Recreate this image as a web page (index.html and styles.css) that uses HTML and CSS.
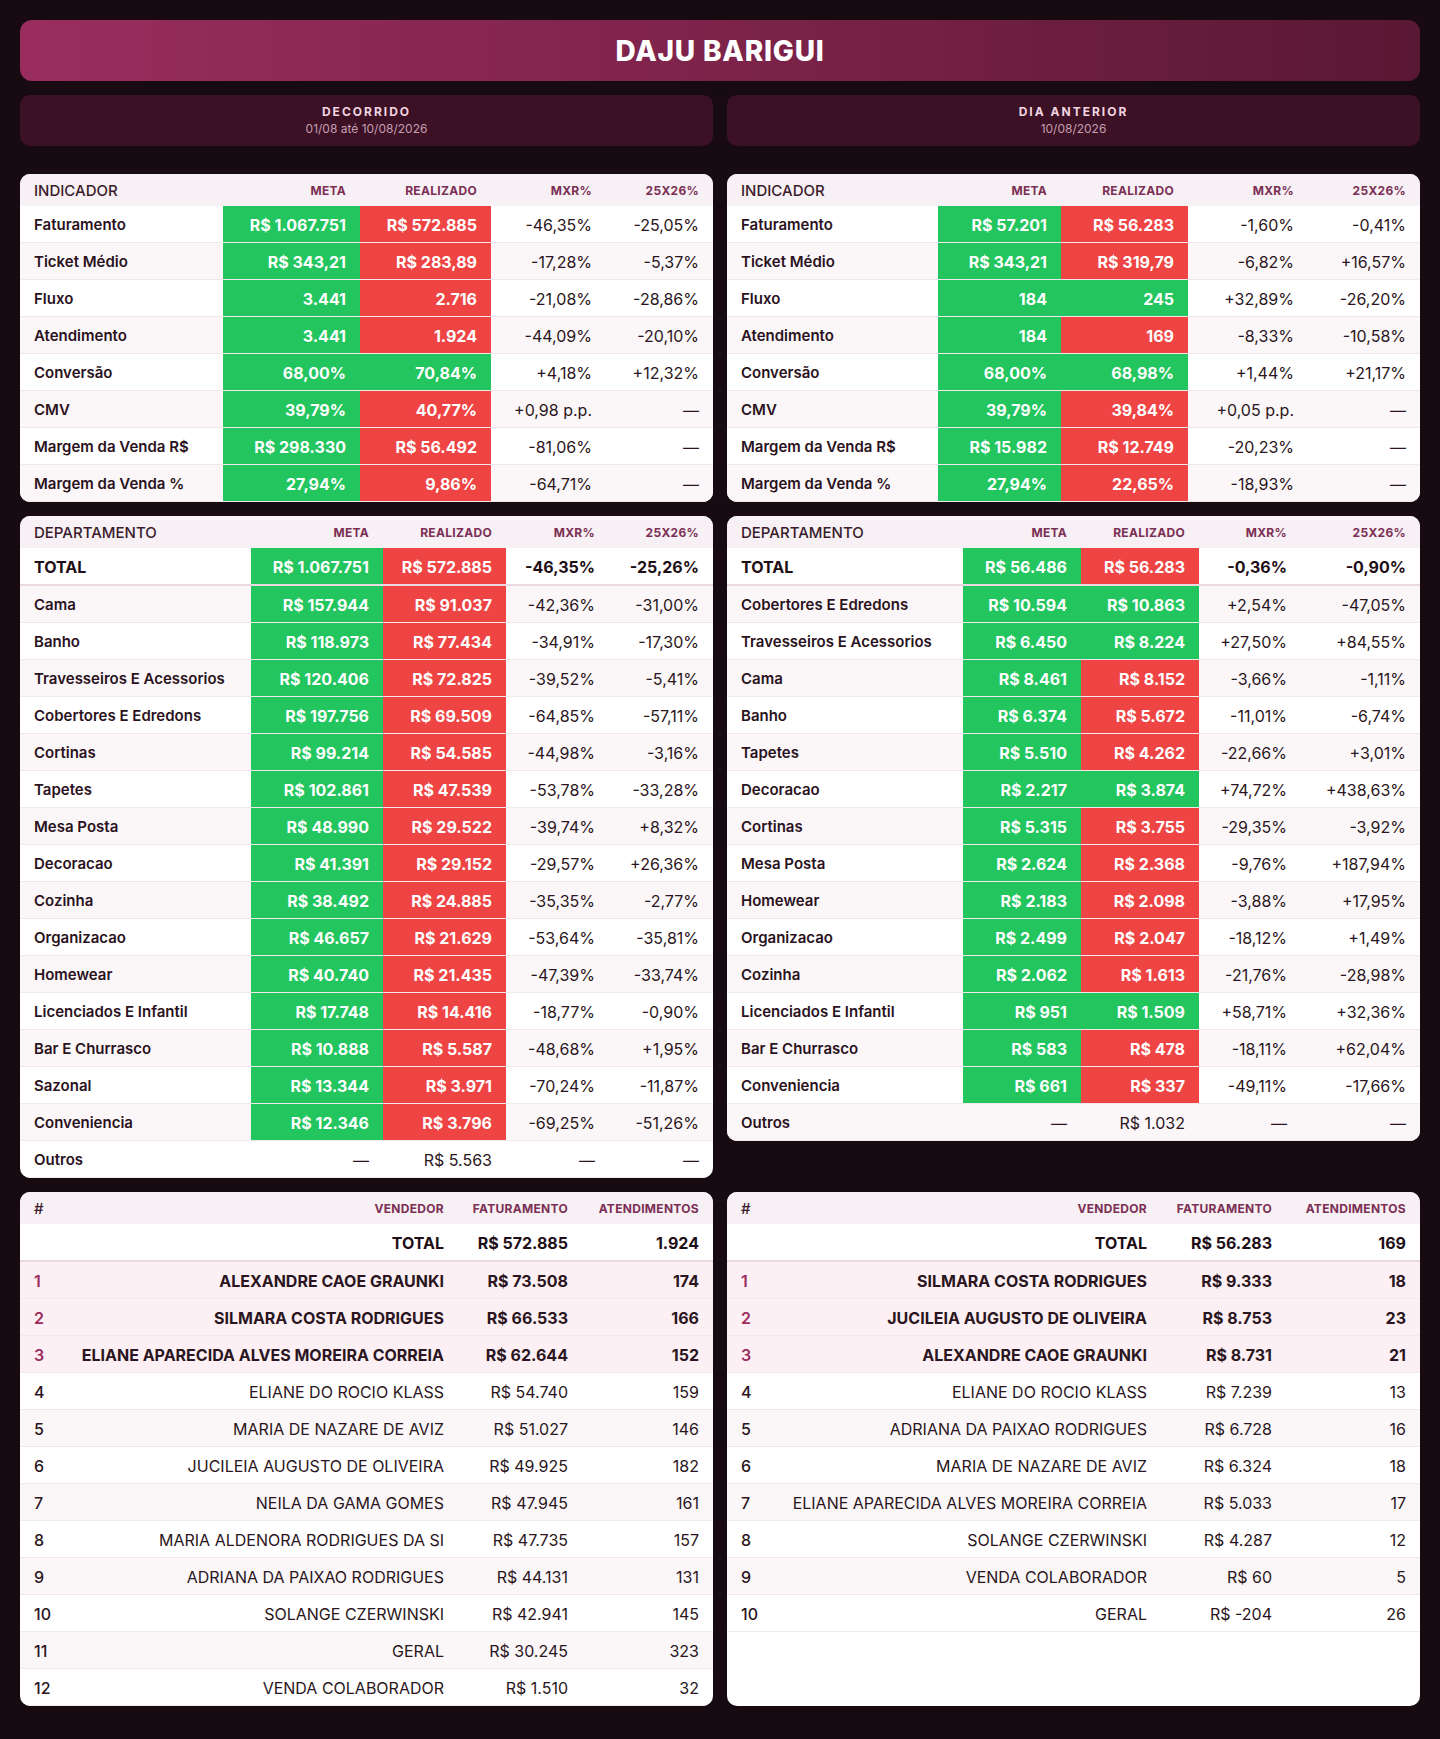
FILE: index.html
```html
<!DOCTYPE html>
<html lang="pt-BR">
<head>
<meta charset="utf-8">
<title>DAJU BARIGUI</title>
<link rel="stylesheet" href="styles.css">
</head>
<body>
<div class="page">
  <header class="titlebar"><h1>DAJU BARIGUI</h1></header>

  <div class="periods">
    <div class="period">
      <div class="period-name">DECORRIDO</div>
      <div class="period-date">01/08 até 10/08/2026</div>
    </div>
    <div class="period">
      <div class="period-name">DIA ANTERIOR</div>
      <div class="period-date">10/08/2026</div>
    </div>
  </div>

  <main class="grid">
    <!-- Indicador esquerdo -->
    <section class="panel panel-fit">
      <table class="tbl ind-l">
        <colgroup><col class="c1"><col class="c2"><col class="c3"><col class="c4"><col class="c5"></colgroup>
        <thead><tr><th class="lead">INDICADOR</th><th>META</th><th>REALIZADO</th><th>MXR%</th><th>25X26%</th></tr></thead>
        <tbody>
          <tr><td class="lbl">Faturamento</td><td class="g">R$ 1.067.751</td><td class="r">R$ 572.885</td><td>-46,35%</td><td>-25,05%</td></tr>
          <tr><td class="lbl">Ticket Médio</td><td class="g">R$ 343,21</td><td class="r">R$ 283,89</td><td>-17,28%</td><td>-5,37%</td></tr>
          <tr><td class="lbl">Fluxo</td><td class="g">3.441</td><td class="r">2.716</td><td>-21,08%</td><td>-28,86%</td></tr>
          <tr><td class="lbl">Atendimento</td><td class="g">3.441</td><td class="r">1.924</td><td>-44,09%</td><td>-20,10%</td></tr>
          <tr><td class="lbl">Conversão</td><td class="g">68,00%</td><td class="g">70,84%</td><td>+4,18%</td><td>+12,32%</td></tr>
          <tr><td class="lbl">CMV</td><td class="g">39,79%</td><td class="r">40,77%</td><td>+0,98 p.p.</td><td>—</td></tr>
          <tr><td class="lbl">Margem da Venda R$</td><td class="g">R$ 298.330</td><td class="r">R$ 56.492</td><td>-81,06%</td><td>—</td></tr>
          <tr><td class="lbl">Margem da Venda %</td><td class="g">27,94%</td><td class="r">9,86%</td><td>-64,71%</td><td>—</td></tr>
        </tbody>
      </table>
    </section>

    <!-- Indicador direito -->
    <section class="panel panel-fit">
      <table class="tbl ind-r">
        <colgroup><col class="c1"><col class="c2"><col class="c3"><col class="c4"><col class="c5"></colgroup>
        <thead><tr><th class="lead">INDICADOR</th><th>META</th><th>REALIZADO</th><th>MXR%</th><th>25X26%</th></tr></thead>
        <tbody>
          <tr><td class="lbl">Faturamento</td><td class="g">R$ 57.201</td><td class="r">R$ 56.283</td><td>-1,60%</td><td>-0,41%</td></tr>
          <tr><td class="lbl">Ticket Médio</td><td class="g">R$ 343,21</td><td class="r">R$ 319,79</td><td>-6,82%</td><td>+16,57%</td></tr>
          <tr><td class="lbl">Fluxo</td><td class="g">184</td><td class="g">245</td><td>+32,89%</td><td>-26,20%</td></tr>
          <tr><td class="lbl">Atendimento</td><td class="g">184</td><td class="r">169</td><td>-8,33%</td><td>-10,58%</td></tr>
          <tr><td class="lbl">Conversão</td><td class="g">68,00%</td><td class="g">68,98%</td><td>+1,44%</td><td>+21,17%</td></tr>
          <tr><td class="lbl">CMV</td><td class="g">39,79%</td><td class="r">39,84%</td><td>+0,05 p.p.</td><td>—</td></tr>
          <tr><td class="lbl">Margem da Venda R$</td><td class="g">R$ 15.982</td><td class="r">R$ 12.749</td><td>-20,23%</td><td>—</td></tr>
          <tr><td class="lbl">Margem da Venda %</td><td class="g">27,94%</td><td class="r">22,65%</td><td>-18,93%</td><td>—</td></tr>
        </tbody>
      </table>
    </section>

    <!-- Departamento esquerdo -->
    <section class="panel panel-fit">
      <table class="tbl dep-l">
        <colgroup><col class="c1"><col class="c2"><col class="c3"><col class="c4"><col class="c5"></colgroup>
        <thead><tr><th class="lead">DEPARTAMENTO</th><th>META</th><th>REALIZADO</th><th>MXR%</th><th>25X26%</th></tr></thead>
        <tbody>
          <tr class="total"><td class="lbl">TOTAL</td><td class="g">R$ 1.067.751</td><td class="r">R$ 572.885</td><td>-46,35%</td><td>-25,26%</td></tr>
          <tr><td class="lbl">Cama</td><td class="g">R$ 157.944</td><td class="r">R$ 91.037</td><td>-42,36%</td><td>-31,00%</td></tr>
          <tr><td class="lbl">Banho</td><td class="g">R$ 118.973</td><td class="r">R$ 77.434</td><td>-34,91%</td><td>-17,30%</td></tr>
          <tr><td class="lbl">Travesseiros E Acessorios</td><td class="g">R$ 120.406</td><td class="r">R$ 72.825</td><td>-39,52%</td><td>-5,41%</td></tr>
          <tr><td class="lbl">Cobertores E Edredons</td><td class="g">R$ 197.756</td><td class="r">R$ 69.509</td><td>-64,85%</td><td>-57,11%</td></tr>
          <tr><td class="lbl">Cortinas</td><td class="g">R$ 99.214</td><td class="r">R$ 54.585</td><td>-44,98%</td><td>-3,16%</td></tr>
          <tr><td class="lbl">Tapetes</td><td class="g">R$ 102.861</td><td class="r">R$ 47.539</td><td>-53,78%</td><td>-33,28%</td></tr>
          <tr><td class="lbl">Mesa Posta</td><td class="g">R$ 48.990</td><td class="r">R$ 29.522</td><td>-39,74%</td><td>+8,32%</td></tr>
          <tr><td class="lbl">Decoracao</td><td class="g">R$ 41.391</td><td class="r">R$ 29.152</td><td>-29,57%</td><td>+26,36%</td></tr>
          <tr><td class="lbl">Cozinha</td><td class="g">R$ 38.492</td><td class="r">R$ 24.885</td><td>-35,35%</td><td>-2,77%</td></tr>
          <tr><td class="lbl">Organizacao</td><td class="g">R$ 46.657</td><td class="r">R$ 21.629</td><td>-53,64%</td><td>-35,81%</td></tr>
          <tr><td class="lbl">Homewear</td><td class="g">R$ 40.740</td><td class="r">R$ 21.435</td><td>-47,39%</td><td>-33,74%</td></tr>
          <tr><td class="lbl">Licenciados E Infantil</td><td class="g">R$ 17.748</td><td class="r">R$ 14.416</td><td>-18,77%</td><td>-0,90%</td></tr>
          <tr><td class="lbl">Bar E Churrasco</td><td class="g">R$ 10.888</td><td class="r">R$ 5.587</td><td>-48,68%</td><td>+1,95%</td></tr>
          <tr><td class="lbl">Sazonal</td><td class="g">R$ 13.344</td><td class="r">R$ 3.971</td><td>-70,24%</td><td>-11,87%</td></tr>
          <tr><td class="lbl">Conveniencia</td><td class="g">R$ 12.346</td><td class="r">R$ 3.796</td><td>-69,25%</td><td>-51,26%</td></tr>
          <tr><td class="lbl">Outros</td><td>—</td><td>R$ 5.563</td><td>—</td><td>—</td></tr>
        </tbody>
      </table>
    </section>

    <!-- Departamento direito -->
    <section class="panel panel-fit">
      <table class="tbl dep-r">
        <colgroup><col class="c1"><col class="c2"><col class="c3"><col class="c4"><col class="c5"></colgroup>
        <thead><tr><th class="lead">DEPARTAMENTO</th><th>META</th><th>REALIZADO</th><th>MXR%</th><th>25X26%</th></tr></thead>
        <tbody>
          <tr class="total"><td class="lbl">TOTAL</td><td class="g">R$ 56.486</td><td class="r">R$ 56.283</td><td>-0,36%</td><td>-0,90%</td></tr>
          <tr><td class="lbl">Cobertores E Edredons</td><td class="g">R$ 10.594</td><td class="g">R$ 10.863</td><td>+2,54%</td><td>-47,05%</td></tr>
          <tr><td class="lbl">Travesseiros E Acessorios</td><td class="g">R$ 6.450</td><td class="g">R$ 8.224</td><td>+27,50%</td><td>+84,55%</td></tr>
          <tr><td class="lbl">Cama</td><td class="g">R$ 8.461</td><td class="r">R$ 8.152</td><td>-3,66%</td><td>-1,11%</td></tr>
          <tr><td class="lbl">Banho</td><td class="g">R$ 6.374</td><td class="r">R$ 5.672</td><td>-11,01%</td><td>-6,74%</td></tr>
          <tr><td class="lbl">Tapetes</td><td class="g">R$ 5.510</td><td class="r">R$ 4.262</td><td>-22,66%</td><td>+3,01%</td></tr>
          <tr><td class="lbl">Decoracao</td><td class="g">R$ 2.217</td><td class="g">R$ 3.874</td><td>+74,72%</td><td>+438,63%</td></tr>
          <tr><td class="lbl">Cortinas</td><td class="g">R$ 5.315</td><td class="r">R$ 3.755</td><td>-29,35%</td><td>-3,92%</td></tr>
          <tr><td class="lbl">Mesa Posta</td><td class="g">R$ 2.624</td><td class="r">R$ 2.368</td><td>-9,76%</td><td>+187,94%</td></tr>
          <tr><td class="lbl">Homewear</td><td class="g">R$ 2.183</td><td class="r">R$ 2.098</td><td>-3,88%</td><td>+17,95%</td></tr>
          <tr><td class="lbl">Organizacao</td><td class="g">R$ 2.499</td><td class="r">R$ 2.047</td><td>-18,12%</td><td>+1,49%</td></tr>
          <tr><td class="lbl">Cozinha</td><td class="g">R$ 2.062</td><td class="r">R$ 1.613</td><td>-21,76%</td><td>-28,98%</td></tr>
          <tr><td class="lbl">Licenciados E Infantil</td><td class="g">R$ 951</td><td class="g">R$ 1.509</td><td>+58,71%</td><td>+32,36%</td></tr>
          <tr><td class="lbl">Bar E Churrasco</td><td class="g">R$ 583</td><td class="r">R$ 478</td><td>-18,11%</td><td>+62,04%</td></tr>
          <tr><td class="lbl">Conveniencia</td><td class="g">R$ 661</td><td class="r">R$ 337</td><td>-49,11%</td><td>-17,66%</td></tr>
          <tr><td class="lbl">Outros</td><td>—</td><td>R$ 1.032</td><td>—</td><td>—</td></tr>
        </tbody>
      </table>
    </section>

    <!-- Vendedores esquerdo -->
    <section class="panel">
      <table class="tbl sel-l">
        <colgroup><col class="c1"><col class="c2"><col class="c3"><col class="c4"></colgroup>
        <thead><tr><th class="lead">#</th><th>VENDEDOR</th><th>FATURAMENTO</th><th>ATENDIMENTOS</th></tr></thead>
        <tbody>
          <tr class="total"><td></td><td>TOTAL</td><td>R$ 572.885</td><td>1.924</td></tr>
          <tr class="top"><td class="rank">1</td><td class="name">ALEXANDRE CAOE GRAUNKI</td><td>R$ 73.508</td><td>174</td></tr>
          <tr class="top"><td class="rank">2</td><td class="name">SILMARA COSTA RODRIGUES</td><td>R$ 66.533</td><td>166</td></tr>
          <tr class="top"><td class="rank">3</td><td class="name">ELIANE APARECIDA ALVES MOREIRA CORREIA</td><td>R$ 62.644</td><td>152</td></tr>
          <tr><td class="rank">4</td><td class="name">ELIANE DO ROCIO KLASS</td><td>R$ 54.740</td><td>159</td></tr>
          <tr><td class="rank">5</td><td class="name">MARIA DE NAZARE DE AVIZ</td><td>R$ 51.027</td><td>146</td></tr>
          <tr><td class="rank">6</td><td class="name">JUCILEIA AUGUSTO DE OLIVEIRA</td><td>R$ 49.925</td><td>182</td></tr>
          <tr><td class="rank">7</td><td class="name">NEILA DA GAMA GOMES</td><td>R$ 47.945</td><td>161</td></tr>
          <tr><td class="rank">8</td><td class="name">MARIA ALDENORA RODRIGUES DA SI</td><td>R$ 47.735</td><td>157</td></tr>
          <tr><td class="rank">9</td><td class="name">ADRIANA DA PAIXAO RODRIGUES</td><td>R$ 44.131</td><td>131</td></tr>
          <tr><td class="rank">10</td><td class="name">SOLANGE CZERWINSKI</td><td>R$ 42.941</td><td>145</td></tr>
          <tr><td class="rank">11</td><td class="name">GERAL</td><td>R$ 30.245</td><td>323</td></tr>
          <tr><td class="rank">12</td><td class="name">VENDA COLABORADOR</td><td>R$ 1.510</td><td>32</td></tr>
        </tbody>
      </table>
    </section>

    <!-- Vendedores direito -->
    <section class="panel">
      <table class="tbl sel-r">
        <colgroup><col class="c1"><col class="c2"><col class="c3"><col class="c4"></colgroup>
        <thead><tr><th class="lead">#</th><th>VENDEDOR</th><th>FATURAMENTO</th><th>ATENDIMENTOS</th></tr></thead>
        <tbody>
          <tr class="total"><td></td><td>TOTAL</td><td>R$ 56.283</td><td>169</td></tr>
          <tr class="top"><td class="rank">1</td><td class="name">SILMARA COSTA RODRIGUES</td><td>R$ 9.333</td><td>18</td></tr>
          <tr class="top"><td class="rank">2</td><td class="name">JUCILEIA AUGUSTO DE OLIVEIRA</td><td>R$ 8.753</td><td>23</td></tr>
          <tr class="top"><td class="rank">3</td><td class="name">ALEXANDRE CAOE GRAUNKI</td><td>R$ 8.731</td><td>21</td></tr>
          <tr><td class="rank">4</td><td class="name">ELIANE DO ROCIO KLASS</td><td>R$ 7.239</td><td>13</td></tr>
          <tr><td class="rank">5</td><td class="name">ADRIANA DA PAIXAO RODRIGUES</td><td>R$ 6.728</td><td>16</td></tr>
          <tr><td class="rank">6</td><td class="name">MARIA DE NAZARE DE AVIZ</td><td>R$ 6.324</td><td>18</td></tr>
          <tr><td class="rank">7</td><td class="name">ELIANE APARECIDA ALVES MOREIRA CORREIA</td><td>R$ 5.033</td><td>17</td></tr>
          <tr><td class="rank">8</td><td class="name">SOLANGE CZERWINSKI</td><td>R$ 4.287</td><td>12</td></tr>
          <tr><td class="rank">9</td><td class="name">VENDA COLABORADOR</td><td>R$ 60</td><td>5</td></tr>
          <tr><td class="rank">10</td><td class="name">GERAL</td><td>R$ -204</td><td>26</td></tr>
        </tbody>
      </table>
    </section>
  </main>
</div>
</body>
</html>
```

FILE: styles.css
```css
* { box-sizing: border-box; }

html, body {
  margin: 0;
  padding: 0;
  background: #170a10;
}

body {
  font-family: Inter, "Noto Sans", "Liberation Sans", sans-serif;
  color: #2a1520;
}

.page {
  padding: 20px 20px 33px;
}

.titlebar {
  height: 61px;
  border-radius: 12px;
  background: linear-gradient(90deg, #992d5f 0%, #7a2248 55%, #591833 100%);
  display: flex;
  align-items: center;
  justify-content: center;
  margin-bottom: 14px;
}

.titlebar h1 {
  margin: 0;
  color: #ffffff;
  font-size: 28px;
  font-weight: 800;
  letter-spacing: 0.8px;
  line-height: 1;
}

.periods {
  display: grid;
  grid-template-columns: 1fr 1fr;
  gap: 14px;
  margin-bottom: 28px;
}

.period {
  background: #3c1125;
  border-radius: 10px;
  padding: 9px 0 8px;
  text-align: center;
}

.period-name {
  color: #f2d5e1;
  font-size: 12px;
  font-weight: 700;
  letter-spacing: 2px;
  line-height: 16px;
}

.period-date {
  color: #c49fb1;
  font-size: 12px;
  line-height: 18px;
}

.grid {
  display: grid;
  grid-template-columns: 1fr 1fr;
  gap: 14px;
}

.panel {
  background: #ffffff;
  border-radius: 10px;
  overflow: hidden;
}

.panel-fit { align-self: start; }

.tbl {
  width: 100%;
  border-collapse: collapse;
  table-layout: fixed;
  font-size: 16px;
}

.tbl th {
  height: 32px;
  padding: 0 14px;
  background: #f7f0f4;
  color: #7b2f55;
  font-size: 12px;
  font-weight: 700;
  letter-spacing: 0.3px;
  text-align: right;
  vertical-align: middle;
  white-space: nowrap;
}

.tbl th.lead {
  text-align: left;
  color: #3a1a2b;
  font-size: 15px;
  font-weight: 500;
  letter-spacing: 0;
}

.tbl td {
  padding: 10px 14px 8px;
  line-height: 18px;
  text-align: right;
  white-space: nowrap;
  border-bottom: 1px solid #f1e8ec;
  color: #2a1520;
}

.tbl tbody tr:nth-child(even) { background: #fbf7f9; }

.tbl td.lbl {
  text-align: left;
  font-size: 15px;
  font-weight: 600;
  color: #2a1220;
}

.tbl td.g {
  background: #22c55e;
  color: #ffffff;
  font-weight: 700;
}

.tbl td.r {
  background: #ef4444;
  color: #ffffff;
  font-weight: 700;
}

.tbl tr.total td {
  font-size: 16px;
  font-weight: 700;
  border-bottom: 2px solid #ead9e2;
  color: #1e0e16;
}

.tbl tr.total td.g,
.tbl tr.total td.r { color: #ffffff; }

.tbl tr.top { background: #fcf0f5; }
.tbl tbody tr.top:nth-child(even) { background: #fcf0f5; }
.tbl tr.top td { font-weight: 700; }

.tbl td.rank {
  text-align: left;
  font-weight: 500;
}

.tbl tr.top td.rank {
  color: #9b2c5e;
  font-weight: 600;
}

.tbl td.name { padding-left: 0; }

/* column widths */
.ind-l .c1 { width: 203px; }
.ind-l .c2 { width: 137px; }
.ind-l .c3 { width: 131px; }
.ind-l .c4 { width: 115px; }

.ind-r .c1 { width: 211px; }
.ind-r .c2 { width: 123px; }
.ind-r .c3 { width: 127px; }
.ind-r .c4 { width: 120px; }

.dep-l .c1 { width: 231px; }
.dep-l .c2 { width: 132px; }
.dep-l .c3 { width: 123px; }
.dep-l .c4 { width: 103px; }

.dep-r .c1 { width: 236px; }
.dep-r .c2 { width: 118px; }
.dep-r .c3 { width: 118px; }
.dep-r .c4 { width: 102px; }

.sel-l .c1 { width: 50px; }
.sel-l .c2 { width: 388px; }
.sel-l .c3 { width: 124px; }

.sel-r .c1 { width: 50px; }
.sel-r .c2 { width: 384px; }
.sel-r .c3 { width: 125px; }
```
